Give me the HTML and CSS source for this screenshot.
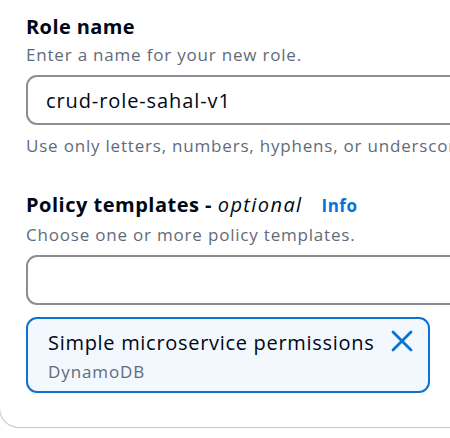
FILE: index.html
```html
<!DOCTYPE html>
<html lang="en">
<head>
<meta charset="utf-8">
<title>Role settings</title>
<link rel="stylesheet" href="styles.css">
</head>
<body>
<div class="card">
  <div class="field">
    <div class="label">Role name</div>
    <div class="desc">Enter a name for your new role.</div>
    <div class="input">crud-role-sahal-v1</div>
    <div class="hint">Use only letters, numbers, hyphens, or underscores. Maximum 64 characters.</div>
  </div>
  <div class="field field-second">
    <div class="label label-wide">Policy templates - <span class="opt">optional</span><a class="info" href="#">Info</a></div>
    <div class="desc desc-tight">Choose one or more policy templates.</div>
    <div class="input"></div>
    <div class="token">
      <div class="token-text">
        <div class="token-title">Simple microservice permissions</div>
        <div class="token-sub">DynamoDB</div>
      </div>
      <svg class="token-x" width="22" height="22" viewBox="0 0 22 22" aria-hidden="true">
        <path d="M2 2 L20 20 M20 2 L2 20" stroke="#0972d3" stroke-width="2.8" fill="none" stroke-linecap="round"/>
      </svg>
    </div>
  </div>
</div>
</body>
</html>
```

FILE: styles.css
```css
html, body {
  margin: 0;
  padding: 0;
  background: #ffffff;
  overflow: hidden;
}
body {
  font-family: "Open Sans", "Noto Sans", sans-serif;
  color: #000716;
  width: 450px;
  height: 438px;
}
.card {
  width: 700px;
  margin-left: -1px;
  box-sizing: border-box;
  border: 1px solid #c6c6cd;
  border-top: none;
  border-radius: 0 0 20px 20px;
  padding: 13px 0 34px 26px;
}
.field {
  width: 560px;
}
.field-second {
  margin-top: 33px;
}
.label {
  font-size: 20px;
  font-weight: 700;
  line-height: 28px;
  letter-spacing: 0.4px;
  white-space: nowrap;
}
.label-wide {
  letter-spacing: 0.5px;
}
.opt {
  font-style: italic;
  font-weight: 400;
  letter-spacing: 1.4px;
}
.info {
  color: #0972d3;
  font-size: 17px;
  font-weight: 700;
  letter-spacing: 0.5px;
  text-decoration: none;
  margin-left: 19px;
}
.desc {
  margin-top: 2px;
  font-size: 17px;
  line-height: 24px;
  letter-spacing: 0.8px;
  color: #5f6b7a;
}
.desc-tight {
  margin-top: 3px;
}
.input {
  margin-top: 8px;
  box-sizing: border-box;
  height: 50px;
  border: 2px solid #8c8c94;
  border-radius: 11px;
  padding: 0 18px;
  font-size: 20px;
  line-height: 48px;
  letter-spacing: 0.9px;
  color: #000716;
}
.hint {
  margin-top: 9px;
  font-size: 17px;
  line-height: 24px;
  letter-spacing: 0.8px;
  color: #5f6b7a;
  white-space: nowrap;
}
.token {
  margin-top: 12px;
  width: 404px;
  box-sizing: border-box;
  height: 76px;
  border: 2px solid #0972d3;
  border-radius: 11px;
  background: #f2f8fd;
  padding: 10px 15px 0 20px;
  display: flex;
  justify-content: space-between;
  align-items: flex-start;
}
.token-title {
  font-size: 20px;
  line-height: 28px;
  letter-spacing: 0.7px;
  color: #000716;
  white-space: nowrap;
}
.token-sub {
  margin-top: 3px;
  font-size: 17px;
  line-height: 24px;
  letter-spacing: 0.9px;
  color: #5f6b7a;
}
.token-x {
  margin-top: 1px;
}
```
